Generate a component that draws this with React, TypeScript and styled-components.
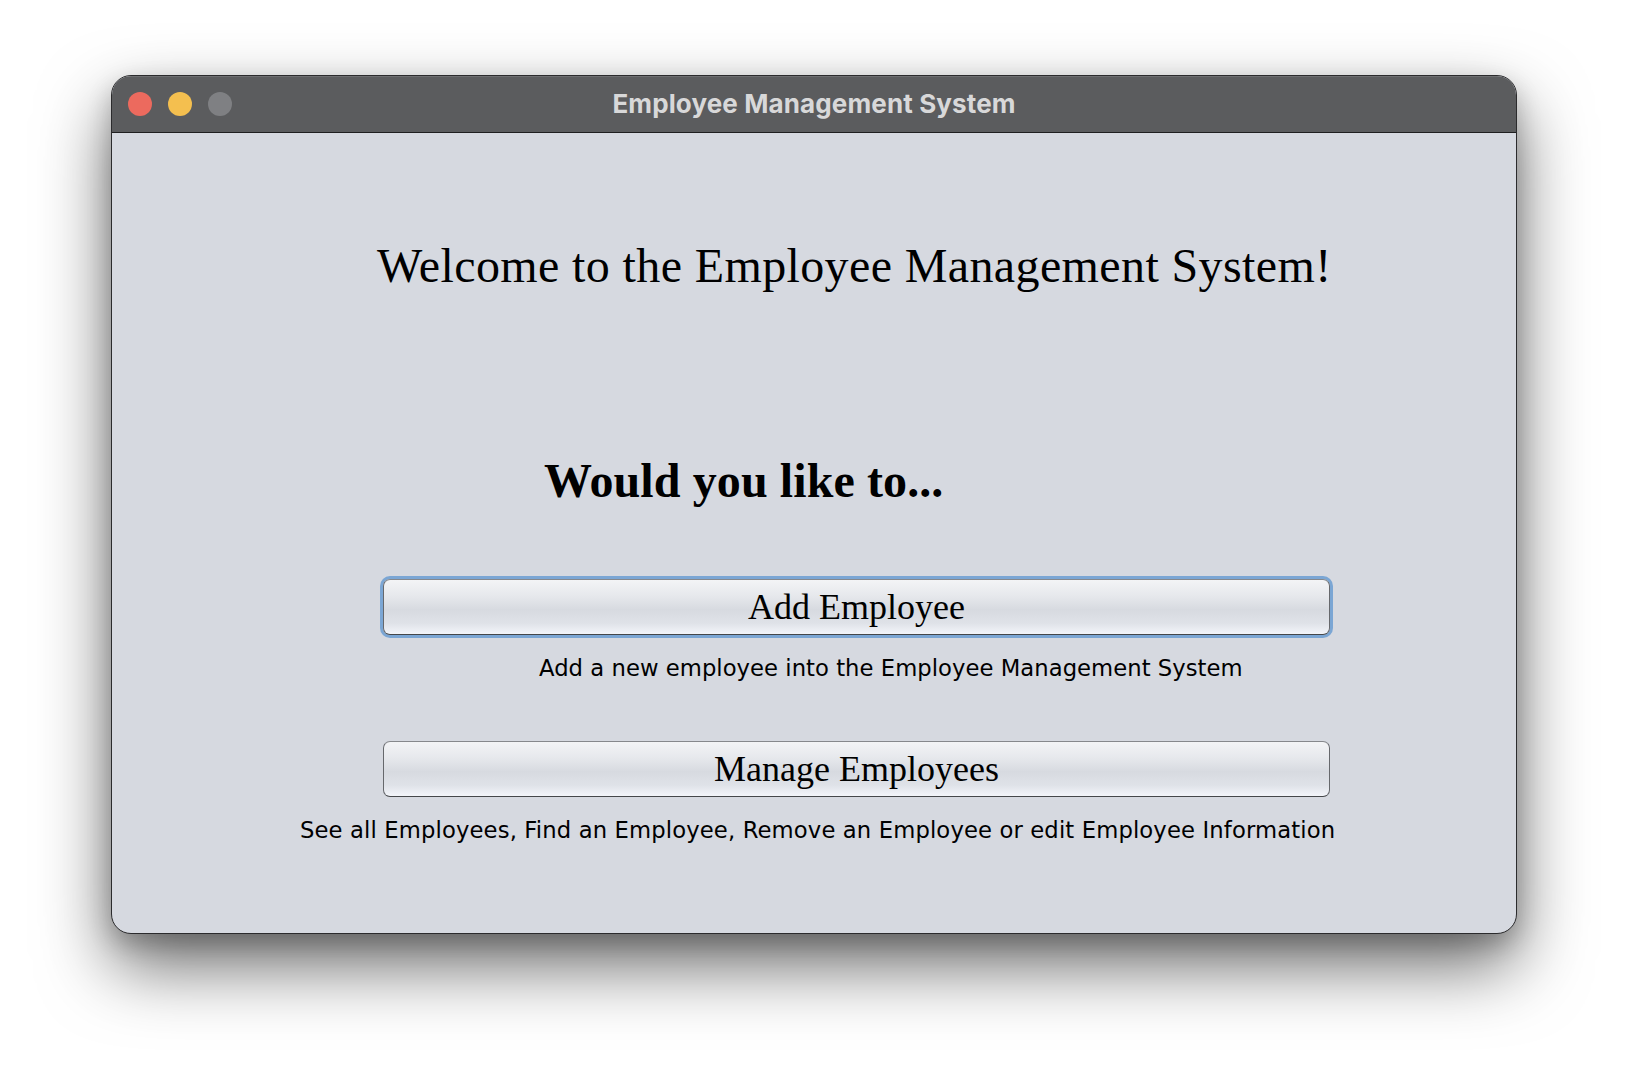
import React from "react";
import styled, { createGlobalStyle } from "styled-components";

const Global = createGlobalStyle`
  html, body { margin: 0; padding: 0; background: #ffffff; }
  body { width: 1628px; height: 1082px; overflow: hidden; }
`;

const Stage = styled.div`
  padding: 75px 0 0 111px;
`;

const Window = styled.div`
  box-sizing: border-box;
  width: 1406px;
  height: 859px;
  border: 1px solid #2b2b2d;
  border-radius: 20px;
  overflow: hidden;
  display: flex;
  flex-direction: column;
  background: #d6d9e0;
  box-shadow: 0 32px 70px rgba(0, 0, 0, 0.58), 0 10px 24px rgba(0, 0, 0, 0.2);
`;

const TitleBar = styled.div`
  box-sizing: border-box;
  height: 57px;
  flex: none;
  background: #5b5c5e;
  border-bottom: 1px solid #1f1f20;
  box-shadow: inset 0 1px 0 rgba(255, 255, 255, 0.12);
  display: grid;
  grid-template-columns: 1fr auto 1fr;
  align-items: center;
`;

const Lights = styled.div`
  display: flex;
  gap: 16px;
  padding-left: 16px;
`;

const Light = styled.span<{ $color: string }>`
  width: 24px;
  height: 24px;
  border-radius: 50%;
  background: ${(p) => p.$color};
`;

const Title = styled.div`
  font-family: Inter, "Open Sans", sans-serif;
  font-weight: 700;
  font-size: 26px;
  letter-spacing: 0.12px;
  color: #d8d8d9;
  line-height: 1;
  margin-top: -1px;
`;

const Content = styled.div`
  flex: 1;
  display: flex;
  flex-direction: column;
  align-items: flex-start;
`;

const Heading = styled.div<{ $bold?: boolean; $left: number; $top: number; $spacing?: number }>`
  font-family: "Liberation Serif", "Times New Roman", serif;
  font-size: 48px;
  line-height: 48px;
  font-weight: ${(p) => (p.$bold ? 700 : 400)};
  letter-spacing: ${(p) => p.$spacing ?? 0}px;
  color: #000;
  margin-left: ${(p) => p.$left}px;
  margin-top: ${(p) => p.$top}px;
  white-space: nowrap;
`;

const Button = styled.button<{ $focused?: boolean; $top: number }>`
  box-sizing: border-box;
  margin-left: 271px;
  margin-top: ${(p) => p.$top}px;
  width: 947px;
  height: 56px;
  border-radius: 7px;
  border: 1px solid #66686c;
  border-top-color: #86888c;
  border-bottom-color: #45474a;
  background: linear-gradient(
    to bottom,
    #f3f4f6 0%,
    #e6e8ec 30%,
    #d7dae0 55%,
    #dfe2e8 80%,
    #f3f5fa 100%
  );
  font-family: "Liberation Serif", "Times New Roman", serif;
  font-size: 36px;
  color: #000;
  padding: 0;
  line-height: 54px;
  cursor: default;
  box-shadow: ${(p) => (p.$focused ? "0 0 0 3px #7ba6d4" : "none")};
`;

const Desc = styled.div<{ $left: number; $spacing?: number }>`
  font-family: "DejaVu Sans", Verdana, sans-serif;
  font-size: 22.7px;
  line-height: 26px;
  letter-spacing: ${(p) => p.$spacing ?? 0}px;
  color: #000;
  margin-left: ${(p) => p.$left}px;
  margin-top: 20px;
  white-space: nowrap;
`;

export default function App() {
  return (
    <>
      <Global />
      <Stage>
        <Window>
          <TitleBar>
            <Lights>
              <Light $color="#ec6a5e" />
              <Light $color="#f4bf4f" />
              <Light $color="#7f8083" />
            </Lights>
            <Title>Employee Management System</Title>
            <div />
          </TitleBar>
          <Content>
            <Heading $left={265} $top={109} $spacing={0.38}>
              Welcome to the Employee Management System!
            </Heading>
            <Heading $bold $left={432} $top={167} $spacing={0.1}>
              Would you like to...
            </Heading>
            <Button $focused $top={74}>
              Add Employee
            </Button>
            <Desc $left={427} $spacing={0.04}>
              Add a new employee into the Employee Management System
            </Desc>
            <Button $top={60}>Manage Employees</Button>
            <Desc $left={188} $spacing={0.13}>
              See all Employees, Find an Employee, Remove an Employee or edit
              Employee Information
            </Desc>
          </Content>
        </Window>
      </Stage>
    </>
  );
}
